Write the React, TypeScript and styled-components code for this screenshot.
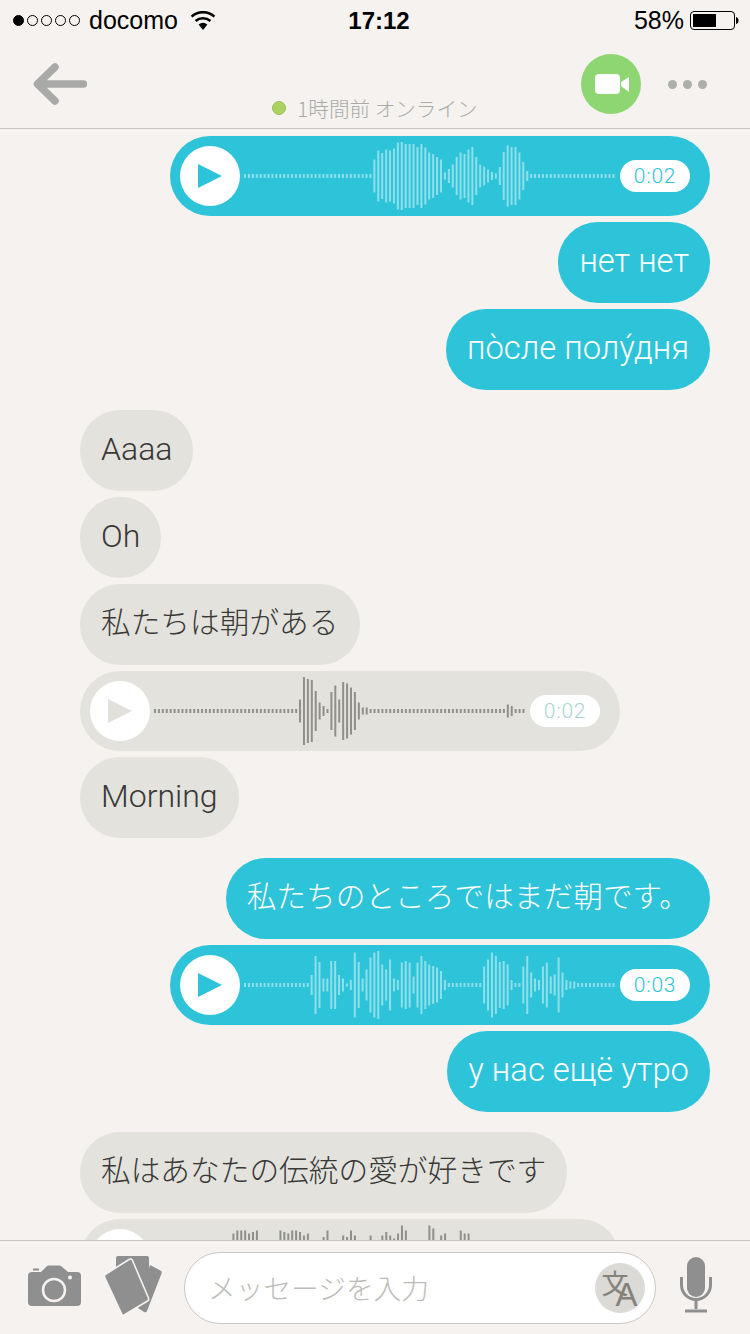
import React from 'react';
import styled, { createGlobalStyle } from 'styled-components';

const GlobalStyle = createGlobalStyle`
  html, body {
    margin: 0;
    padding: 0;
    background: #f5f2ef;
  }
  * {
    box-sizing: border-box;
  }
`;

const LATIN = '"Roboto", "Noto Sans CJK JP", sans-serif';
const CJK = '"Noto Sans CJK JP", "Roboto", sans-serif';
const BLUE = '#2dc3d8';
const GREY = '#e3e2dd';

type Script = 'latin' | 'cyrillic' | 'cjk';

const SCRIPT_SIZE: Record<Script, number> = { latin: 32, cyrillic: 32.8, cjk: 29.7 };
const SCRIPT_LIFT: Record<Script, number> = { latin: 4, cyrillic: 3, cjk: 9 };

const Page = styled.div`
  width: 750px;
  height: 1334px;
  display: flex;
  flex-direction: column;
  overflow: hidden;
  background: #f5f2ef;
  font-family: ${LATIN};
`;

const Header = styled.header`
  flex: none;
  height: 129px;
  border-bottom: 1px solid #c9c7c3;
`;

const StatusBar = styled.div`
  height: 40px;
  padding: 1px 11px 0 13px;
  display: grid;
  grid-template-columns: 1fr auto 1fr;
  align-items: center;
  color: #000;
  font-family: 'Liberation Sans', sans-serif;
  font-size: 25px;
`;

const Carrier = styled.div`
  display: flex;
  align-items: center;
`;

const Signal = styled.div`
  display: flex;
  gap: 3px;
  margin-right: 9px;
`;

const SignalDot = styled.span<{ $on?: boolean }>`
  width: 11px;
  height: 11px;
  border-radius: 50%;
  border: 1px solid #000;
  background: ${(p) => (p.$on ? '#000' : 'transparent')};
`;

const Wifi = styled.svg`
  margin-left: 12px;
`;

const Clock = styled.div`
  font-size: 24px;
  font-weight: 700;
  margin-left: 6px;
`;

const Battery = styled.div`
  display: flex;
  align-items: center;
  justify-content: flex-end;
  gap: 6px;
`;

const Nav = styled.div`
  height: 88px;
  display: grid;
  grid-template-columns: 1fr auto 1fr;
`;

const BackButton = styled.div`
  padding-left: 33px;
  display: flex;
  align-items: center;
`;

const Presence = styled.div`
  align-self: end;
  padding-bottom: 6px;
  display: flex;
  align-items: center;
  gap: 11px;
  color: #aaaaa8;
  font-family: ${CJK};
  font-weight: 300;
  font-size: 20.6px;
  line-height: 28px;
`;

const PresenceDot = styled.span`
  width: 14px;
  height: 14px;
  border-radius: 50%;
  background: #aed262;
  border: 1px solid #9cc158;
`;

const NavActions = styled.div`
  padding-right: 43px;
  display: flex;
  align-items: center;
  justify-content: flex-end;
  gap: 27px;
`;

const VideoButton = styled.div`
  width: 60px;
  height: 60px;
  border-radius: 50%;
  background: #8dd672;
  display: flex;
  align-items: center;
  justify-content: center;
`;

const More = styled.div`
  display: flex;
  gap: 6px;
`;

const MoreDot = styled.span`
  width: 9px;
  height: 9px;
  border-radius: 50%;
  background: #aeaeac;
`;

const Chat = styled.main`
  flex: 1;
  min-height: 0;
  overflow: hidden;
  padding: 7px 40px 0 80px;
  display: flex;
  flex-direction: column;
  gap: 20px;
`;

const Group = styled.section<{ $mine?: boolean }>`
  display: flex;
  flex-direction: column;
  gap: 6px;
  align-items: ${(p) => (p.$mine ? 'flex-end' : 'flex-start')};
`;

const Bubble = styled.div<{ $mine?: boolean; $script?: Script }>`
  height: 81px;
  padding: 0 21px ${(p) => SCRIPT_LIFT[p.$script ?? 'latin']}px;
  border-radius: 40px;
  display: flex;
  align-items: center;
  white-space: nowrap;
  font-family: ${(p) => (p.$script === 'cjk' ? CJK : LATIN)};
  font-weight: 300;
  font-size: ${(p) => SCRIPT_SIZE[p.$script ?? 'latin']}px;
  background: ${(p) => (p.$mine ? BLUE : GREY)};
  color: ${(p) => (p.$mine ? '#fff' : '#383835')};
`;

const AudioRow = styled.div<{ $mine?: boolean }>`
  flex: none;
  width: 540px;
  height: 80px;
  padding: 10px 20px 10px 10px;
  border-radius: 40px;
  display: flex;
  align-items: center;
  background: ${(p) => (p.$mine ? BLUE : GREY)};
`;

const PlayButton = styled.div`
  flex: none;
  width: 60px;
  height: 60px;
  border-radius: 50%;
  background: #fff;
  display: flex;
  align-items: center;
  justify-content: center;
`;

const WaveForm = styled.svg`
  flex: none;
  margin: 0 4px;
`;

const Duration = styled.div<{ $mine?: boolean }>`
  flex: none;
  width: 70px;
  height: 32px;
  border-radius: 16px;
  background: #fff;
  display: flex;
  align-items: center;
  justify-content: center;
  font-size: 21px;
  font-weight: 300;
  letter-spacing: 0.8px;
  color: ${(p) => (p.$mine ? BLUE : '#a9d3d3')};
`;

const Composer = styled.footer`
  flex: none;
  height: 94px;
  border-top: 1px solid #c9c7c3;
  padding: 0 38px 0 28px;
  display: flex;
  align-items: center;
  background: #f5f2ef;
`;

const CameraIcon = styled.svg`
  flex: none;
  margin: 0 23px 4px 0;
`;

const CardsIcon = styled.svg`
  flex: none;
  margin: 0 22px 4px 0;
`;

const InputBox = styled.div`
  flex: none;
  width: 472px;
  height: 72px;
  border-radius: 36px;
  border: 1px solid #c9c7c3;
  background: #fff;
  margin-right: 24px;
  padding: 0 10px 0 23px;
  display: flex;
  align-items: center;
  justify-content: space-between;
`;

const Placeholder = styled.span`
  font-family: ${CJK};
  font-weight: 300;
  font-size: 27.7px;
  line-height: 36px;
  margin-bottom: 2px;
  color: #bcbcba;
`;

const TranslateBadge = styled.svg`
  flex: none;
`;

const MicIcon = styled.svg`
  flex: none;
  margin-bottom: 5px;
`;

const dots = (n: number) => Array<number>(n).fill(4);

const WAVE_A = [
  ...dots(33),
  33, 51, 46, 53, 51, 55, 67, 68, 64, 64, 64, 58, 64, 57, 47, 44, 38, 33, 7, 14,
  23, 38, 47, 44, 53, 58, 38, 23, 19, 13, 8, 5, 18, 48, 61, 58, 58, 47, 28, 10,
  ...dots(22),
];

const WAVE_B = [
  ...dots(37),
  23, 68, 64, 62, 40, 17, 10, 4, 38, 51, 23, 58, 55, 47, 38, 17, 7, 7,
  ...dots(35),
  13, 10, 4, 4, 4,
];

const WAVE_C = [
  ...dots(17),
  20, 58, 46, 13, 13, 48, 48, 20, 13, 3, 10, 65, 46, 13, 31, 55, 65, 68, 41, 31,
  51, 13, 10, 45, 48, 45, 17, 45, 58, 48, 41, 38, 35, 28, 10,
  ...dots(9),
  37, 51, 65, 58, 46, 48, 41, 10, 4, 4, 37, 58, 25, 13, 10, 37, 45, 17, 21, 55,
  25, 10, 7, 7,
  ...dots(10),
];

// only the tops of this one show above the composer
const WAVE_D = [
  ...dots(20),
  51, 57, 57, 57, 51, 54, 57, 10, 10, 10, 10, 10,
  57, 54, 51, 57, 57, 54, 47, 51, 10, 10, 10,
  44, 57, 10, 10, 10, 47, 44, 57, 47, 10, 10, 10, 47, 10, 10,
  47, 54, 47, 41, 51, 67, 57, 10, 10, 10, 10, 10,
  67, 61, 10, 47, 51, 10, 10, 10, 57, 51, 51,
  ...dots(14),
];

const BAR_PITCH = 3.92;

type AudioProps = {
  mine?: boolean;
  time?: string;
  bars: number[];
};

const Audio = ({ mine, time, bars }: AudioProps) => (
  <AudioRow $mine={mine}>
    <PlayButton>
      <svg width="24" height="24" viewBox="0 0 24 24">
        <polygon points="0,0 24,12 0,24" fill={mine ? BLUE : '#e3e0dc'} />
      </svg>
    </PlayButton>
    <WaveForm width="372" height="70" viewBox="0 0 372 70">
      {bars.map((h, i) => (
        <rect
          key={i}
          x={i * BAR_PITCH}
          y={35 - h / 2}
          width="2"
          height={h}
          fill={mine ? '#8fdfeb' : '#8f8f8c'}
        />
      ))}
    </WaveForm>
    {time && <Duration $mine={mine}>{time}</Duration>}
  </AudioRow>
);

export default function App() {
  return (
    <Page>
      <GlobalStyle />
      <Header>
        <StatusBar>
          <Carrier>
            <Signal>
              <SignalDot $on />
              <SignalDot />
              <SignalDot />
              <SignalDot />
              <SignalDot />
            </Signal>
            docomo
            <Wifi width="26" height="19" viewBox="0 0 26 19">
              <path d="M13 19 L8.6 13.6 A7 7 0 0 1 17.4 13.6 Z" fill="#000" />
              <path d="M5.6 10 A11.4 11.4 0 0 1 20.4 10" fill="none" stroke="#000" strokeWidth="2.6" />
              <path d="M1.6 5.6 A17 17 0 0 1 24.4 5.6" fill="none" stroke="#000" strokeWidth="2.6" />
            </Wifi>
          </Carrier>
          <Clock>17:12</Clock>
          <Battery>
            58%
            <svg width="49" height="20" viewBox="0 0 49 20">
              <rect x="0.5" y="0.5" width="44" height="18" rx="3.5" fill="none" stroke="#000" />
              <rect x="3" y="3" width="23" height="13" fill="#000" />
              <path d="M46 6 Q48.5 6.5 48.5 9.5 Q48.5 12.5 46 13 Z" fill="#000" />
            </svg>
          </Battery>
        </StatusBar>
        <Nav>
          <BackButton>
            <svg width="54" height="42" viewBox="0 0 54 42">
              <path
                d="M50.5 21 H5 M22 4 L4.5 21 L22 38"
                fill="none"
                stroke="#a9a9a7"
                strokeWidth="7.5"
                strokeLinecap="round"
                strokeLinejoin="round"
              />
            </svg>
          </BackButton>
          <Presence>
            <PresenceDot />
            1時間前 オンライン
          </Presence>
          <NavActions>
            <VideoButton>
              <svg width="36" height="20" viewBox="0 0 36 20">
                <rect x="2" y="0" width="25" height="20" rx="4" fill="#fff" />
                <polygon points="28,8 36,3 36,18 28,12" fill="#fff" />
              </svg>
            </VideoButton>
            <More>
              <MoreDot />
              <MoreDot />
              <MoreDot />
            </More>
          </NavActions>
        </Nav>
      </Header>

      <Chat>
        <Group $mine>
          <Audio mine time="0:02" bars={WAVE_A} />
          <Bubble $mine $script="cyrillic">нет нет</Bubble>
          <Bubble $mine $script="cyrillic">по̀сле полу́дня</Bubble>
        </Group>
        <Group>
          <Bubble>Aaaa</Bubble>
          <Bubble>Oh</Bubble>
          <Bubble $script="cjk">私たちは朝がある</Bubble>
          <Audio time="0:02" bars={WAVE_B} />
          <Bubble>Morning</Bubble>
        </Group>
        <Group $mine>
          <Bubble $mine $script="cjk">私たちのところではまだ朝です。</Bubble>
          <Audio mine time="0:03" bars={WAVE_C} />
          <Bubble $mine $script="cyrillic">у нас ещё утро</Bubble>
        </Group>
        <Group>
          <Bubble $script="cjk">私はあなたの伝統の愛が好きです</Bubble>
          <Audio bars={WAVE_D} />
        </Group>
      </Chat>

      <Composer>
        <CameraIcon width="53" height="41" viewBox="0 0 53 41">
          <path
            d="M4 7 H13 L19 1 Q19.6 0.5 21 0.5 H31 Q32.4 0.5 33 1 L40 7 H49 Q53 7 53 11 V37 Q53 41 49 41 H4 Q0 41 0 37 V11 Q0 7 4 7 Z"
            fill="#8f8f8f"
          />
          <rect x="5" y="3.5" width="6" height="2" fill="#8f8f8f" />
          <circle cx="26" cy="25" r="11" fill="none" stroke="#f5f2ef" strokeWidth="2.5" />
          <circle cx="42" cy="12.5" r="2" fill="#f5f2ef" />
        </CameraIcon>
        <CardsIcon width="58" height="60" viewBox="0 0 58 60">
          <path d="M46 9 L56.5 14.5 Q58.2 15.5 57.5 17.5 L43 55 Q42 57 40 56 L34 52 Z" fill="#8f8f8f" />
          <rect x="12" y="0" width="33" height="43" rx="2" fill="#8f8f8f" />
          <path
            d="M2 18 L25 3.5 Q27.5 2.2 28.5 4.5 L44.5 42 Q45.3 44 43.5 45 L20.5 58.7 Q18.5 59.7 17.5 57.5 L0.5 21 Q-0.3 19.2 2 18 Z"
            fill="#8f8f8f"
            stroke="#f5f2ef"
            strokeWidth="1.6"
          />
        </CardsIcon>
        <InputBox>
          <Placeholder>メッセージを入力</Placeholder>
          <TranslateBadge width="50" height="50" viewBox="0 0 50 50">
            <circle cx="25" cy="25" r="25" fill="#dcdad6" />
            <text x="6.5" y="31" fontSize="27" fill="#85827a" fontFamily={CJK}>文</text>
            <text x="20.5" y="43" fontSize="33" fill="#85827a" fontFamily="'Liberation Sans', sans-serif">A</text>
          </TranslateBadge>
        </InputBox>
        <MicIcon width="32" height="56" viewBox="0 0 32 56">
          <rect x="7" y="0" width="18" height="40" rx="9" fill="#8f8f8f" />
          <path d="M1.5 20 V28 A14.5 14.5 0 0 0 30.5 28 V20" fill="none" stroke="#8f8f8f" strokeWidth="3" />
          <path d="M16 42 V52 M5 54 H27" fill="none" stroke="#8f8f8f" strokeWidth="3" />
        </MicIcon>
      </Composer>
    </Page>
  );
}
